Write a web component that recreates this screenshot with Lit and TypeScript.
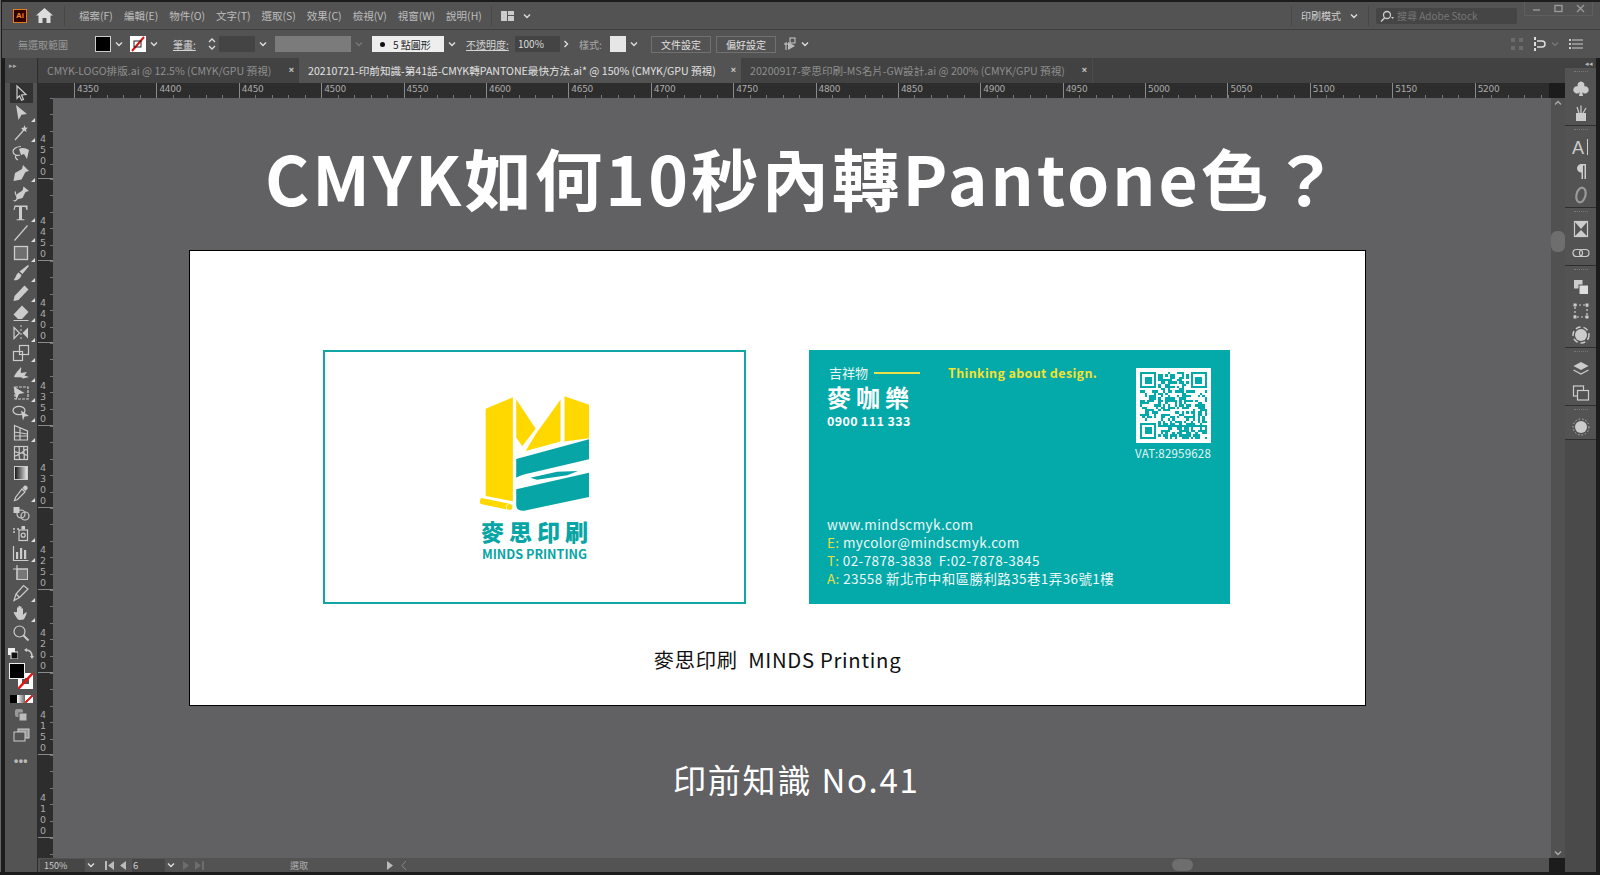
import { LitElement, html, css, svg } from 'lit';
import { customElement } from 'lit/decorators.js';

const chev = html`<svg class="chev" viewBox="0 0 10 10"><polyline points="2,3.5 5,6.5 8,3.5" /></svg>`;

const i = (body: unknown) => html`<svg class="ico" viewBox="0 0 18 18">${body}</svg>`;

// toolbar icons, top to bottom, 20px a row
const tools: { icon: unknown; more?: boolean; on?: boolean }[] = [
  { on: true, icon: svg`<path class="ln" d="M5 2l9 8.5-4.5.5 2 4.5-2 .8-2-4.5L5 14.5z"/>` },
  { more: true, icon: svg`<path class="fl" d="M4 1l11 9-5.500.8L6.500 16z"/>` },
  { more: true, icon: svg`<path class="ln" stroke-width="1.600" d="M3 16L11 7"/><path class="fl" d="M12.500 1l.8 2.500 2.500.3-1.800 1.700.5 2.500-2.200-1.200-2.200 1.100.5-2.500L9 4l2.500-.3z"/>` },
  { icon: svg`<path class="ln" stroke-width="1.500" d="M9 2.500c-4.500 0-8 2.200-8 5s3.500 4.500 7 3.500M4 11c-1 2 0 4 2 5"/><path class="fl" d="M7 5c3-2 7-1 10 1l-2 9-3-5-3 1z"/>` },
  { more: true, icon: svg`<path class="fl" d="M11 1l6 6-3.500 1-4 7.500L1.500 17l1.500-8 7-4z"/>` },
  { icon: svg`<path class="ln" stroke-width="1.500" d="M1.500 16.500c2.500 1.200 3.500-1 3.500-3s-2.500-3.500-1.500-6"/><path class="fl" d="M11.500 2.500l5.500 4.500-3.500 1-3 6-5.500 1.500 0-5.500 5.500-3.500z"/>` },
  { more: true, icon: svg`<path class="fl" d="M2.500 1.500h13v4.500h-1l-1-3h-3.500v12l2.500.5v.8H4.500V15.500l2.500-.5V3H3.500l-1 3h-1z"/>` },
  { more: true, icon: svg`<path class="ln" d="M2.500 16.500L15.500 1.500"/>` },
  { more: true, icon: svg`<rect x="2.500" y="2.500" width="13" height="13" fill="#6f6f6f" stroke="#ccc" stroke-width="1.300"/>` },
  { more: true, icon: svg`<path class="fl" d="M16 1l1 1-6.500 8-3-2.500z"/><path class="fl" d="M6.500 8.500l3 2.500C8.500 15.500 4 17 1.500 16c2-1 2.500-6 5-7.500z"/>` },
  { more: true, icon: svg`<path class="fl" d="M12.500 1.500l4 4-10 10.500-5 1 1-5z"/>` },
  { more: true, icon: svg`<path class="fl" d="M10 1.500l6.500 6.500-6.500 7H6l-4.500-4.500z"/><path d="M1.500 16.500h15" stroke="#ccc"/>` },
  { more: true, icon: svg`<path class="ln" d="M2 3.500l5.500 5.500-5.500 5.500z"/><path class="fl" d="M16 3.500l-5.500 5.500 5.500 5.500z"/><path d="M9 1v16" stroke="#ccc" stroke-dasharray="2 2"/>` },
  { more: true, icon: svg`<rect class="ln" x="1.500" y="7.500" width="9" height="9"/><rect class="ln" x="7.500" y="1.500" width="9" height="9"/>` },
  { more: true, icon: svg`<path class="fl" d="M2 13c2-5 5-7 7-10 1 2-1 4 0 6l6-1-2.500 3.500L17 13l-6 1.500c-2-2.500-5-.5-9-1.500z"/>` },
  { more: true, icon: svg`<path class="ln" d="M3 3h13v12H3z" stroke-dasharray="3 1"/><path class="fl" d="M1.500 2.500l11 6.500-5.500 1-2.500 5.500z"/>` },
  { more: true, icon: svg`<ellipse class="ln" stroke-width="1.500" cx="7" cy="6.500" rx="6" ry="4.200"/><path class="fl" d="M9 6.500l8 5.500-4.500.5-1.500 4z"/>` },
  { more: true, icon: svg`<path class="ln" d="M2.500 1.500l13 5.500v9h-13zM2.500 8l13 2M8 3.800V16M2.500 12h13"/>` },
  { icon: svg`<rect class="ln" x="2.500" y="2.500" width="13" height="13"/><path class="ln" d="M2.500 8c3-1 3 2 6.500 1s3-5 6.500-3M2.500 12c3 0 4-2 6.500-3s4 3 6.500 2M7 2.500c1 3-1 10 1 13M12 2.500c-1 3 1 10 0 13"/>` },
  { icon: svg`<defs><linearGradient id="gr"><stop offset="0" stop-color="#111"/><stop offset="1" stop-color="#eee"/></linearGradient></defs><rect x="2.500" y="2.500" width="13" height="13" fill="url(#gr)" stroke="#ccc"/>` },
  { more: true, icon: svg`<path class="fl" d="M12 2c2-1.500 4.500 1 3.500 3l-2 2-3-3z"/><path class="ln" stroke-width="1.500" d="M10 5l3 3-7.500 7.500-3 1 1-3z"/>` },
  { icon: svg`<rect class="fl" x="1.500" y="3" width="6" height="6"/><circle class="ln" cx="9" cy="10" r="4"/><circle class="ln" cx="13" cy="12" r="4"/>` },
  { more: true, icon: svg`<rect class="ln" x="7" y="6" width="8.500" height="10.500"/><circle class="ln" cx="11.200" cy="11.200" r="2"/><path d="M1 5h2M5 5h2M1 8h2" stroke="#ccc" stroke-width="1.500"/><rect class="fl" x="9.500" y="2" width="3.500" height="3.500"/>` },
  { more: true, icon: svg`<path class="ln" d="M1.500 2v14.500h15"/><path class="fl" d="M4 8h2.200v7H4zM8 4h2.200v11H8zM12 6h2.200v9H12z"/>` },
  { icon: svg`<rect x="5" y="5" width="10.500" height="10.500" fill="#777" stroke="#ccc"/><path class="ln" d="M1 5h15M5 1v15"/>` },
  { more: true, icon: svg`<path class="ln" stroke-width="1.400" d="M2 16.500l2-6.500 7.500-8.500 4.500 3.500-8.500 8.500z"/><path class="ln" d="M4 10l3.500 3.500"/>` },
  { more: true, icon: svg`<path class="fl" d="M5 8V4c0-1 1.500-1 1.500 0v3V2.500c0-1 1.500-1 1.500 0V7V3c0-1 1.500-1 1.500 0v4.500V5c0-1 1.500-1 1.500 0v6c2-2 3-3 3.500-2.500S14 12 12 15c-1 1-5 1.500-6.500 0C4 13 3 11 1.800 9c-.5-1 1-1.500 1.500-.7z"/>` },
  { icon: svg`<circle class="ln" stroke-width="1.400" cx="7.500" cy="7.500" r="5.500"/><path d="M11.500 11.500l5 5" stroke="#ccc" stroke-width="2"/>` },
];

const dock: unknown[][] = [
  [
    svg`<path class="fl" d="M9 1.500a3.500 3.500 0 0 1 3.200 4.800 3.600 3.600 0 1 1-2 5.700L11 16H7l.8-4a3.600 3.600 0 1 1-2-5.700A3.500 3.500 0 0 1 9 1.500z"/>`,
    svg`<path class="fl" d="M4 9h10v8H4z"/><path class="ln" stroke-width="1.500" d="M7 9L5 3M9 9V1.500M11 9l3-5"/>`,
  ],
  [
    svg`<text x="0" y="15.500" class="tx" font-size="18">A</text><path d="M15.500 1v16" stroke="#ccc"/>`,
    svg`<path class="fl" d="M14 2v15h-1.500V3.500H11V17H9.500v-6.500A4.200 4.200 0 0 1 9 2z"/>`,
    svg`<ellipse cx="9" cy="9" rx="4.500" ry="7.500" fill="none" stroke="#999" stroke-width="2.200" transform="rotate(14 9 9)"/>`,
  ],
  [
    svg`<rect class="ln" x="2.500" y="1.500" width="13" height="15"/><path class="fl" d="M2.500 1.500l6.500 7.500 6.500-7.500zM2.500 16.500L9 10l6.500 6.500z"/>`,
    svg`<rect class="ln" stroke-width="1.500" x="1" y="5.500" width="9.500" height="7" rx="3.500"/><rect class="ln" stroke-width="1.500" x="7.500" y="5.500" width="9.500" height="7" rx="3.500"/>`,
  ],
  [
    svg`<rect class="fl" x="2" y="2" width="8.500" height="8.500"/><rect x="7" y="7" width="9.500" height="9.500" fill="#ddd" stroke="#535353"/>`,
    svg`<rect class="ln" x="3" y="3" width="12" height="12" stroke-dasharray="2 2"/><path class="fl" d="M1.500 1.500h3v3h-3zM13.500 1.500h3v3h-3zM1.500 13.500h3v3h-3zM13.500 13.500h3v3h-3z"/>`,
    svg`<circle class="fl" cx="9" cy="9" r="6"/><circle cx="9" cy="9" r="8" fill="none" stroke="#ccc" stroke-width="1.500" stroke-dasharray="5 3"/>`,
  ],
  [
    svg`<path class="fl" d="M9 2l7.500 4L9 10 1.500 6z"/><path class="ln" d="M1.500 10l7.500 4 7.500-4" stroke-width="2.200"/>`,
    svg`<rect class="ln" x="1.500" y="2" width="10" height="10"/><rect x="5.500" y="6.500" width="11" height="9.500" fill="#535353" stroke="#ccc" stroke-width="1.200"/>`,
  ],
  [svg`<circle class="fl" cx="9" cy="9" r="6"/><circle cx="9" cy="9" r="8" fill="none" stroke="#bbb" stroke-dasharray="1.500 2"/>`],
];

const menus = ['檔案(F)', '編輯(E)', '物件(O)', '文字(T)', '選取(S)', '效果(C)', '檢視(V)', '視窗(W)', '說明(H)'];
const hLabels = Array.from({ length: 18 }, (_, n) => 4350 + n * 50);
const vLabels = Array.from({ length: 9 }, (_, n) => 4500 - n * 50);

// QR is not a real code, only the same look: finders plus seeded noise
function qrPath() {
  const size = 29;
  let seed = 82959628;
  const next = () => {
    seed = (seed * 1103515245 + 12345) & 0x7fffffff;
    return (seed >> 16) & 1;
  };
  const inFinder = (x: number, y: number) =>
    (x < 8 && y < 8) || (x > 20 && y < 8) || (x < 8 && y > 20);
  let d = '';
  const put = (x: number, y: number, w = 1, h = 1) => {
    d += `M${x} ${y}h${w}v${h}h${-w}z`;
  };
  for (let y = 0; y < size; y++) {
    for (let x = 0; x < size; x++) {
      const bit = next();
      if (!inFinder(x, y) && bit) put(x, y);
    }
  }
  for (const [fx, fy] of [[0, 0], [22, 0], [0, 22]]) {
    put(fx, fy, 7, 1);
    put(fx, fy + 6, 7, 1);
    put(fx, fy, 1, 7);
    put(fx + 6, fy, 1, 7);
    put(fx + 2, fy + 2, 3, 3);
  }
  return d;
}

@customElement('app-root')
export class AppRoot extends LitElement {
  static styles = css`
    :host {
      display: block;
      width: 1600px;
      height: 875px;
      overflow: hidden;
      background: #1c1c1c;
      font-family: 'Noto Sans CJK TC', 'Noto Sans', sans-serif;
      color: #c4c4c4;
      font-size: 10px;
    }
    svg {
      flex: none;
      display: block;
    }
    .app {
      display: flex;
      flex-direction: column;
      width: 1600px;
      height: 872px;
      padding: 2px 4px 0 4px;
      box-sizing: border-box;
      border-left: 1px solid #666;
    }
    .chev {
      width: 10px;
      height: 10px;
      margin-left: 3px;
      fill: none;
      stroke: #ddd;
      stroke-width: 1.4;
    }
    .chev-dim .chev {
      stroke: #777;
    }
    .ico {
      width: 18px;
      height: 18px;
    }
    .ln {
      fill: none;
      stroke: #ccc;
      stroke-width: 1.2;
    }
    .fl {
      fill: #ccc;
    }
    .tx {
      fill: #ccc;
      font-family: 'Liberation Sans', sans-serif;
    }

    /* menu bar */
    .menubar {
      height: 27px;
      margin-left: -3px;
      margin-right: -4px;
      background: #535353;
      display: flex;
      align-items: center;
      position: relative;
    }
    .ailogo {
      width: 14px;
      height: 14px;
      margin-left: 11px;
      background: #330000;
      border: 1px solid #e8791a;
      box-sizing: border-box;
      color: #f08a24;
      font: bold 8px/12px 'Liberation Sans', sans-serif;
      text-align: center;
    }
    .home {
      width: 17px;
      height: 15px;
      margin-left: 9px;
    }
    .vsep {
      width: 1px;
      height: 20px;
      background: #474747;
    }
    .home + .vsep {
      margin-left: 11px;
    }
    .menus {
      display: flex;
      gap: 11px;
      margin-left: 14px;
      font-size: 10.500px;
      color: #bdbdbd;
    }
    .menus + .vsep {
      margin-left: 9px;
    }
    .wslayout {
      width: 13px;
      height: 10px;
      margin-left: 9px;
      margin-right: 5px;
    }
    .menubar .mode {
      margin-left: auto;
      display: flex;
      align-items: center;
      padding: 0 9px 0 9px;
      height: 20px;
      border-left: 1px solid #474747;
      border-right: 1px solid #474747;
      color: #d0d0d0;
      font-size: 10px;
    }
    .mode .chev {
      margin-left: 8px;
    }
    .search {
      width: 141px;
      height: 16px;
      margin-left: 7px;
      margin-right: 7px;
      background: #454545;
      border-radius: 2px;
      display: flex;
      align-items: center;
      gap: 3px;
      padding-left: 3px;
      box-sizing: border-box;
      color: #777;
      font-size: 10px;
    }
    .search svg {
      width: 15px;
      height: 12px;
    }
    .winbtns {
      display: flex;
      align-self: flex-start;
      width: 69px;
      height: 14px;
      margin-right: 7px;
      border: 1px solid #5e5e5e;
      border-top: 0;
      box-sizing: border-box;
      justify-content: space-around;
      align-items: center;
    }
    .winbtns svg {
      width: 9px;
      height: 9px;
      fill: none;
      stroke: #999;
      stroke-width: 1.4;
    }

    /* control bar */
    .ctrl {
      height: 29px;
      margin-left: -3px;
      margin-right: -4px;
      background: #535353;
      border-top: 1px solid #3e3e3e;
      box-sizing: border-box;
      display: flex;
      align-items: center;
      white-space: nowrap;
    }
    .ctrl > * {
      flex: none;
    }
    .nosel {
      width: 50px;
      margin-left: 16px;
      color: #999;
    }
    .swatch {
      height: 16px;
      width: 16px;
      box-sizing: border-box;
    }
    .sw-fill {
      margin-left: 27px;
      background: #000;
      border: 1px solid #ccc;
    }
    .sw-stroke {
      margin-left: 6px;
      background: #fff;
    }
    .sw-style {
      margin-left: 5px;
      background: #e6e6e6;
    }
    .lab {
      text-decoration: underline;
      color: #d4d4d4;
    }
    .lab-stroke {
      width: 27px;
      margin-left: 14px;
    }
    .spin {
      width: 10px;
      height: 16px;
      margin-left: 7px;
      fill: none;
      stroke: #ddd;
      stroke-width: 1.3;
    }
    .input {
      height: 16px;
      background: #444;
      box-sizing: border-box;
      color: #ddd;
      line-height: 16px;
    }
    .in-stroke {
      width: 36px;
      margin-left: 2px;
    }
    .dead {
      width: 76px;
      height: 16px;
      margin-left: 7px;
      background: #7b7b7b;
    }
    .brush {
      width: 72px;
      height: 16px;
      margin-left: 8px;
      background: #eee;
      color: #222;
      display: flex;
      align-items: center;
      gap: 8px;
      padding-left: 8px;
      box-sizing: border-box;
    }
    .brush::before {
      content: '';
      width: 5px;
      height: 5px;
      border-radius: 50%;
      background: #111;
    }
    .lab-op {
      width: 43px;
      margin-left: 9px;
    }
    .in-op {
      width: 45px;
      margin-left: 6px;
      padding-left: 3px;
    }
    .step {
      width: 12px;
      height: 12px;
      fill: none;
      stroke: #ddd;
      stroke-width: 1.400;
    }
    .lab-style {
      width: 26px;
      margin-left: 7px;
      color: #aaa;
    }
    .btn {
      width: 60px;
      height: 17px;
      margin-left: 5px;
      border: 1px solid #707070;
      box-sizing: border-box;
      text-align: center;
      line-height: 15px;
      color: #e0e0e0;
    }
    .btn-first {
      margin-left: 12px;
    }
    .arrange {
      width: 14px;
      height: 14px;
      margin-left: 7px;
    }
    .ctrl-right {
      margin-left: auto;
      margin-right: 17px;
      display: flex;
      align-items: center;
      gap: 9px;
    }
    .ctrl-right svg.ico {
      width: 14px;
      height: 14px;
    }
    .snap {
      display: flex;
      align-items: center;
    }

    /* body */
    .body {
      flex: 1;
      min-height: 0;
      display: flex;
    }
    .tools {
      width: 32px;
      flex: none;
      background: #535353;
      border-right: 1px solid #2c2c2c;
      display: flex;
      flex-direction: column;
      align-items: center;
    }
    .tools-head {
      height: 25px;
      width: 100%;
      flex: none;
      color: #aaa;
      font-size: 7px;
      line-height: 14px;
      padding-left: 4px;
      box-sizing: border-box;
      background: #484848;
    }
    .tool {
      width: 23px;
      height: 20px;
      flex: none;
      display: flex;
      align-items: center;
      justify-content: center;
      position: relative;
    }
    .tool.on {
      background: #323232;
    }
    .tool.more::after {
      content: '';
      position: absolute;
      right: -2px;
      bottom: 1px;
      border: 2px solid transparent;
      border-right-color: #ddd;
      border-bottom-color: #ddd;
    }
    .swap {
      width: 26px;
      height: 11px;
      margin-top: 5px;
      display: flex;
      justify-content: space-between;
      flex: none;
    }
    .swap svg {
      width: 10px;
      height: 11px;
    }
    .fillstroke {
      width: 24px;
      height: 26px;
      margin-top: 4px;
      position: relative;
      flex: none;
    }
    .fs-stroke {
      position: absolute;
      right: 0;
      bottom: 0;
      width: 15px;
      height: 16px;
    }
    .fs-fill {
      position: absolute;
      left: 0;
      top: 0;
      width: 16px;
      height: 16px;
      background: #000;
      border: 1px solid #eee;
      box-sizing: border-box;
    }
    .modes {
      width: 23px;
      height: 8px;
      margin-top: 6px;
      flex: none;
      display: flex;
    }
    .modes i {
      flex: 1;
      background: #000;
    }
    .modes i:nth-child(2) {
      background: linear-gradient(90deg, #fff, #666);
    }
    .modes i:nth-child(3) {
      background: linear-gradient(135deg, #fff 42%, #e22 42% 58%, #fff 58%);
    }
    .drawmode {
      margin-top: 5px;
      width: 14px;
      height: 14px;
    }
    .screenmode {
      margin-top: 6px;
      width: 17px;
      height: 14px;
    }
    .dots {
      margin-top: 13px;
      color: #bbb;
      font: bold 12px/12px 'Liberation Sans', sans-serif;
      letter-spacing: 0.5px;
    }

    .center {
      flex: 1;
      min-width: 0;
      display: flex;
      flex-direction: column;
    }
    .tabs {
      height: 25px;
      flex: none;
      display: flex;
      background: #424242;
      font-size: 10.600px;
      color: #8f8f8f;
    }
    .tab {
      display: flex;
      align-items: center;
      white-space: nowrap;
      box-sizing: border-box;
      padding-left: 9px;
      position: relative;
    }
    .tab b {
      position: absolute;
      right: 5px;
      top: 6px;
      font: bold 9px/12px 'Liberation Sans', sans-serif;
      color: #ccc;
    }
    .tab.t1 {
      width: 261px;
    }
    .tab.t2 {
      width: 442px;
      background: #535353;
      color: #e2e2e2;
    }
    .tab.t3 {
      width: 352px;
      border-right: 1px solid #4c4c4c;
    }
    .hruler {
      height: 15px;
      flex: none;
      background: #2d2d2d;
      display: flex;
      overflow: hidden;
      padding-left: 36px;
      margin-right: 16px;
      position: relative;
      background-image: repeating-linear-gradient(90deg, #777 0 1px, transparent 1px 16.480px);
      background-size: 100% 3px;
      background-repeat: no-repeat;
      background-position: 36px bottom;
    }
    .hseg {
      width: 82.400px;
      flex: none;
      box-sizing: border-box;
      border-left: 1px solid #8a8a8a;
      padding-left: 2px;
      font: 9px/12px 'DejaVu Sans', sans-serif;
      color: #aaa;
      letter-spacing: -0.3px;
    }
    .hseg.blank {
      width: 60px;
    }
    .work {
      flex: 1;
      min-height: 0;
      display: flex;
    }
    .vruler {
      width: 15px;
      flex: none;
      background: #2d2d2d;
      overflow: hidden;
      display: flex;
      flex-direction: column;
    }
    .vseg {
      height: 82.400px;
      flex: none;
      box-sizing: border-box;
      border-bottom: 1px solid #8a8a8a;
      display: flex;
      flex-direction: column;
      justify-content: flex-end;
      padding-left: 2px;
      padding-bottom: 1px;
      font: 9.500px/11px 'DejaVu Sans', sans-serif;
      color: #aaa;
      background-image: repeating-linear-gradient(180deg, #777 0 1px, transparent 1px 16.480px);
      background-size: 3px 100%;
      background-repeat: no-repeat;
      background-position: right top;
    }
    .vseg:first-child {
      height: 80.500px;
    }
    .vseg.blank {
      height: 22px;
      border-bottom: 0;
    }
    .canvas {
      flex: 1;
      min-width: 0;
      background: #616164;
      display: flex;
      flex-direction: column;
      align-items: flex-start;
      overflow: hidden;
    }
    .title {
      margin: 39px 0 0 212px;
      color: #fff;
      font-size: 67.500px;
      font-weight: 700;
      line-height: 80px;
      letter-spacing: 3px;
      white-space: nowrap;
    }
    .artboard {
      margin: 33px 0 0 136px;
      width: 1177px;
      height: 456px;
      box-sizing: border-box;
      background: #fff;
      border: 1px solid #000;
      display: flex;
      flex-direction: column;
      align-items: center;
      padding-top: 99px;
    }
    .cards {
      display: flex;
      gap: 63px;
      align-self: flex-start;
      margin-left: 133px;
    }
    .card {
      height: 254px;
      box-sizing: border-box;
    }
    .front {
      width: 423px;
      border: 2px solid #12a5a5;
      display: flex;
      flex-direction: column;
      align-items: center;
      padding-top: 43px;
    }
    .logo {
      width: 110px;
      height: 118px;
    }
    .cn-name {
      margin-top: 5px;
      font-size: 23px;
      line-height: 26px;
      font-weight: 900;
      letter-spacing: 5px;
      margin-right: -5px;
      color: #07a5a5;
    }
    .en-name {
      margin-top: 1px;
      font-size: 12.600px;
      line-height: 17px;
      font-weight: 700;
      color: #07a5a5;
    }
    .back {
      width: 421px;
      background: #04a9a9;
      color: #fff;
      padding: 13px 19px 17px 18px;
      display: flex;
      flex-direction: column;
      justify-content: space-between;
    }
    .back-top {
      display: flex;
    }
    .who {
      width: 120px;
    }
    .mascot {
      display: flex;
      align-items: center;
      gap: 6px;
      font-size: 13px;
      line-height: 18px;
      margin: 1px 0 -1px 2px;
      color: #e8f5f3;
    }
    .mascot i {
      width: 46px;
      height: 2px;
      background: #e9e04a;
    }
    .person {
      font-size: 24px;
      font-weight: 700;
      line-height: 32px;
      letter-spacing: 5px;
      white-space: nowrap;
    }
    .phone {
      font-size: 12.500px;
      line-height: 16px;
      font-weight: 700;
      letter-spacing: 0.350px;
      white-space: nowrap;
    }
    .slogan {
      margin: 1px 0 0 1px;
      color: #f6e22c;
      font-size: 12.500px;
      font-weight: 700;
      line-height: 18px;
      letter-spacing: 0.350px;
      white-space: nowrap;
    }
    .qrcol {
      margin-left: auto;
      margin-top: 5px;
      width: 75px;
    }
    .qr {
      width: 75px;
      height: 75px;
      background: #fff;
      padding: 4px;
      box-sizing: border-box;
    }
    .qr svg {
      width: 67px;
      height: 67px;
    }
    .vat {
      margin-top: 2px;
      margin-left: -1px;
      font-size: 11.500px;
      line-height: 16px;
      white-space: nowrap;
      letter-spacing: 0.200px;
      color: #e4f4f2;
    }
    .contact {
      font-size: 13.500px;
      line-height: 18px;
      letter-spacing: 0.400px;
      white-space: pre;
      color: #eef8f7;
    }
    .contact span {
      color: #e6e045;
    }
    .caption {
      margin-top: 40px;
      color: #111;
      font-size: 20.300px;
      line-height: 30px;
      letter-spacing: 0.700px;
      white-space: pre;
    }
    .footer {
      margin: 50px 0 0 620px;
      color: #fff;
      font-size: 33px;
      line-height: 46px;
      letter-spacing: 1.800px;
      white-space: nowrap;
    }
    .vscroll {
      width: 14px;
      flex: none;
      background: #515151;
      display: flex;
      flex-direction: column;
      align-items: center;
      justify-content: space-between;
      position: relative;
    }
    .vscroll .chev {
      margin: 0;
      stroke: #aaa;
    }
    .vscroll .up {
      transform: rotate(180deg);
    }
    .thumb-v {
      position: absolute;
      left: 0;
      top: 133px;
      width: 14px;
      height: 21px;
      border-radius: 6px;
      background: #6e6e6e;
    }
    .status {
      height: 14px;
      flex: none;
      background: #535353;
      display: flex;
      align-items: center;
      position: relative;
      margin-right: 16px;
      padding-left: 2px;
    }
    .zoomval {
      width: 45px;
      height: 13px;
      background: #464646;
      color: #ccc;
      font-size: 9px;
      line-height: 13px;
      padding-left: 4px;
      box-sizing: border-box;
    }
    .status .chev {
      margin-left: 1px;
      margin-right: 1px;
    }
    .nav {
      width: 11px;
      height: 11px;
      margin-left: 3px;
      fill: #bbb;
    }
    .nav.first {
      margin-left: 7px;
    }
    .nav.dim {
      fill: #6d6d6d;
    }
    .pageval {
      width: 33px;
      height: 13px;
      margin-left: 3px;
      background: #464646;
      color: #ccc;
      font-size: 9.500px;
      line-height: 13px;
      padding-left: 1px;
      box-sizing: border-box;
    }
    .selstate {
      margin-left: 85px;
      color: #b0b0b0;
      font-size: 9px;
      width: 91px;
    }
    .thumb-h {
      position: absolute;
      left: 1134px;
      top: 1px;
      width: 21px;
      height: 12px;
      border-radius: 6px;
      background: #6e6e6e;
    }

    /* panel dock */
    .dock {
      width: 31px;
      flex: none;
      background: #424242;
      display: flex;
      flex-direction: column;
    }
    .dock-head {
      height: 10px;
      flex: none;
      color: #bbb;
      font-size: 7px;
      line-height: 10px;
      text-align: right;
      padding-right: 3px;
    }
    .dock-group {
      flex: none;
      background: #535353;
      border-bottom: 1px solid #2e2e2e;
      padding: 11px 0 3px;
      display: flex;
      flex-direction: column;
      align-items: center;
      gap: 6px;
    }
    .dock-group::before {
      content: '';
      width: 14px;
      height: 0;
      margin-top: -8px;
      margin-bottom: 2px;
      border-top: 1px dotted #777;
    }
    .dock-rest {
      flex: 1;
      background: #4a4a4a;
    }
  `;

  private renderControlBar() {
    return html`
      <div class="ctrl">
        <span class="nosel">無選取範圍</span>
        <span class="swatch sw-fill"></span>${chev}
        <svg class="swatch sw-stroke" viewBox="0 0 16 16"><path d="M2 15L14 1" stroke="#d11" stroke-width="2" /><rect x="4" y="5" width="7" height="6" fill="none" stroke="#222" /></svg>${chev}
        <span class="lab lab-stroke">筆畫:</span>
        <svg class="spin" viewBox="0 0 10 16"><polyline points="2,6 5,3 8,6" /><polyline points="2,10 5,13 8,10" /></svg>
        <span class="input in-stroke"></span>${chev}
        <span class="dead"></span><span class="chev-dim">${chev}</span>
        <span class="brush">5 點圓形</span>${chev}
        <span class="lab lab-op">不透明度:</span>
        <span class="input in-op">100%</span>
        <svg class="step" viewBox="0 0 12 12"><polyline points="4.500,3 7.500,6 4.500,9" /></svg>
        <span class="lab-style">樣式:</span>
        <span class="swatch sw-style"></span>${chev}
        <span class="btn btn-first">文件設定</span>
        <span class="btn">偏好設定</span>
        <svg class="arrange" viewBox="0 0 14 14"><path d="M1 7h4M3 5v8" stroke="#ccc" /><rect x="7" y="1" width="5" height="5" fill="none" stroke="#ccc" /><path d="M5 5l7 4-7 4z" fill="#bbb" /></svg>${chev}
        <div class="ctrl-right">
          <svg class="ico" viewBox="0 0 14 14"><path fill="#6b6b6b" d="M1 1h4v4H1zM9 1h4v4H9zM1 9h4v4H1zM9 9h4v4H9z" /></svg>
          <span class="chev-dim snap">
            <svg class="ico" viewBox="0 0 14 14"><path fill="#ddd" d="M1 0h2v3H1zM1 5h2v4H1zM1 11h2v3H1z" /><path d="M4 4h5a3 3 0 0 1 0 6H4" fill="none" stroke="#ddd" stroke-width="1.500" /></svg>${chev}
          </span>
          <svg class="ico" viewBox="0 0 14 14"><path stroke="#ccc" d="M3 3h11M3 7h11M3 11h11" /><path fill="#ccc" d="M0 2h2v2H0zM0 6h2v2H0zM0 10h2v2H0z" /></svg>
        </div>
      </div>
    `;
  }

  private renderTools() {
    return html`
      <div class="tools">
        <div class="tools-head">▸▸</div>
        ${tools.map(
          (t) => html`<div class="tool ${t.on ? 'on' : ''} ${t.more ? 'more' : ''}">${i(t.icon)}</div>`
        )}
        <div class="swap">
          <svg viewBox="0 0 10 11"><rect x="0" y="0" width="7" height="7" fill="#eee" /><rect x="3" y="4" width="7" height="7" fill="#111" stroke="#eee" /></svg>
          <svg viewBox="0 0 10 11"><path d="M2 2c4 0 6 2 6 7" fill="none" stroke="#ccc" stroke-width="1.500" /><path d="M0 2l3-2v4zM6 8h4l-2 3z" fill="#ccc" /></svg>
        </div>
        <div class="fillstroke">
          <svg class="fs-stroke" viewBox="0 0 15 16"><rect width="15" height="16" fill="#fff" /><rect x="4" y="5" width="7" height="6" fill="#535353" /><path d="M0 16L15 0" stroke="#e11" stroke-width="2.500" /></svg>
          <div class="fs-fill"></div>
        </div>
        <div class="modes"><i></i><i></i><i></i></div>
        <svg class="drawmode" viewBox="0 0 14 14"><rect x="1" y="1" width="8" height="8" rx="2" fill="#999" /><rect x="5" y="5" width="8" height="8" fill="#bbb" stroke="#535353" /></svg>
        <svg class="screenmode" viewBox="0 0 17 14"><rect x="5" y="1" width="11" height="9" fill="#9a9a9a" stroke="#ccc" /><rect x="1" y="4" width="11" height="9" fill="#535353" stroke="#ccc" /></svg>
        <div class="dots">•••</div>
      </div>
    `;
  }

  private renderLogo() {
    return html`
      <svg class="logo" viewBox="180 72 328 350">
        <g fill="#ffd800">
          <path d="M197 112L278 78V388L197 372Z" />
          <path d="M288 84L346 172 306 224 288 198Z" />
          <path d="M420 85V210L316 238 346 188Z" />
          <path d="M432 75L505 100V200L432 210Z" />
          <path d="M184 378L272 396 268 414 182 396Q176 386 184 378Z" />
        </g>
        <circle cx="268" cy="405" r="10" fill="#ffd800" stroke="#fff" stroke-width="2" />
        <g fill="#07a5a5">
          <path d="M288 262L505 203V263L330 304Q300 310 288 318Z" />
          <path d="M330 318L410 300 472 298 440 310 350 324Z" />
          <path d="M288 352L505 303V375L312 416Q288 418 288 398Z" />
        </g>
      </svg>
    `;
  }

  private renderBack() {
    return html`
      <div class="card back">
        <div class="back-top">
          <div class="who">
            <div class="mascot">吉祥物<i></i></div>
            <div class="person">麥咖樂</div>
            <div class="phone">0900 111 333</div>
          </div>
          <div class="slogan">Thinking about design.</div>
          <div class="qrcol">
            <div class="qr">
              <svg viewBox="0 0 29 29" shape-rendering="crispEdges"><path d=${qrPath()} fill="#04a9a9" /></svg>
            </div>
            <div class="vat">VAT:82959628</div>
          </div>
        </div>
        <div class="contact">www.mindscmyk.com
<span>E:</span> mycolor@mindscmyk.com
<span>T:</span> 02-7878-3838  F:02-7878-3845
<span>A:</span> 23558 新北市中和區勝利路35巷1弄36號1樓</div>
      </div>
    `;
  }

  render() {
    return html`
      <div class="app">
        <div class="menubar">
          <div class="ailogo">Ai</div>
          <svg class="home" viewBox="0 0 17 15"><path fill="#ddd" d="M8.500 0L17 7.500h-2.500V15h-4v-5h-4v5h-4V7.500H0z" /></svg>
          <div class="vsep"></div>
          <div class="menus">${menus.map((m) => html`<span>${m}</span>`)}</div>
          <div class="vsep"></div>
          <svg class="wslayout" viewBox="0 0 13 10"><path fill="#ccc" d="M0 0h6v10H0zM7 0h6v4H7zM7 5h6v5H7z" /></svg>${chev}
          <div class="mode">印刷模式${chev}</div>
          <div class="search">
            <svg viewBox="0 0 15 12"><circle cx="8" cy="5" r="3.500" fill="none" stroke="#ccc" stroke-width="1.300" /><path d="M5.500 8L2 11.500" stroke="#ccc" stroke-width="1.500" /><path d="M12 7h3l-1.500 2z" fill="#ccc" /></svg>
            搜尋 Adobe Stock
          </div>
          <div class="winbtns">
            <svg viewBox="0 0 9 9"><path d="M1 6h7" /></svg>
            <svg viewBox="0 0 9 9"><rect x="1" y="1.500" width="7" height="6" /></svg>
            <svg viewBox="0 0 9 9"><path d="M1 1l7 7M8 1L1 8" /></svg>
          </div>
        </div>
        ${this.renderControlBar()}
        <div class="body">
          ${this.renderTools()}
          <div class="center">
            <div class="tabs">
              <div class="tab t1">CMYK-LOGO排版.ai @ 12.5% (CMYK/GPU 預視)<b>×</b></div>
              <div class="tab t2">20210721-印前知識-第41話-CMYK轉PANTONE最快方法.ai* @ 150% (CMYK/GPU 預視)<b>×</b></div>
              <div class="tab t3">20200917-麥思印刷-MS名片-GW設計.ai @ 200% (CMYK/GPU 預視)<b>×</b></div>
            </div>
            <div class="hruler">
              ${hLabels.map((n) => html`<div class="hseg">${n}</div>`)}
              <div class="hseg blank"></div>
            </div>
            <div class="work">
              <div class="vruler">
                ${vLabels.map(
                  (n) => html`<div class="vseg">${String(n).split('').map((c) => html`<span>${c}</span>`)}</div>`
                )}
                <div class="vseg blank"></div>
              </div>
              <div class="canvas">
                <div class="title">CMYK如何10秒內轉Pantone色？</div>
                <div class="artboard">
                  <div class="cards">
                    <div class="card front">
                      ${this.renderLogo()}
                      <div class="cn-name">麥思印刷</div>
                      <div class="en-name">MINDS PRINTING</div>
                    </div>
                    ${this.renderBack()}
                  </div>
                  <div class="caption">麥思印刷  MINDS Printing</div>
                </div>
                <div class="footer">印前知識 No.41</div>
              </div>
              <div class="vscroll">
                <svg class="chev up" viewBox="0 0 10 10"><polyline points="2,3.500 5,6.500 8,3.500" /></svg>
                <div class="thumb-v"></div>
                ${chev}
              </div>
            </div>
            <div class="status">
              <div class="zoomval">150%</div>${chev}
              <svg class="nav first" viewBox="0 0 11 11"><path d="M1 1h2v9H1zM10 1v9L4 5.500z" /></svg>
              <svg class="nav" viewBox="0 0 11 11"><path d="M8 1v9L2 5.500z" /></svg>
              <div class="pageval">6</div>${chev}
              <svg class="nav dim" viewBox="0 0 11 11"><path d="M3 1v9l6-4.500z" /></svg>
              <svg class="nav dim" viewBox="0 0 11 11"><path d="M1 1v9l6-4.500zM8 1h2v9H8z" /></svg>
              <div class="selstate">選取</div>
              <svg class="nav" viewBox="0 0 11 11"><path d="M3 1v9l6-4.500z" /></svg>
              <svg class="nav dim" viewBox="0 0 11 11"><path d="M8 1L4 5.500 8 10" fill="none" stroke="#888" /></svg>
              <div class="thumb-h"></div>
            </div>
          </div>
          <div class="dock">
            <div class="dock-head">◂◂</div>
            ${dock.map(
              (g) => html`<div class="dock-group">${g.map((ic) => i(ic))}</div>`
            )}
            <div class="dock-rest"></div>
          </div>
        </div>
      </div>
    `;
  }
}
